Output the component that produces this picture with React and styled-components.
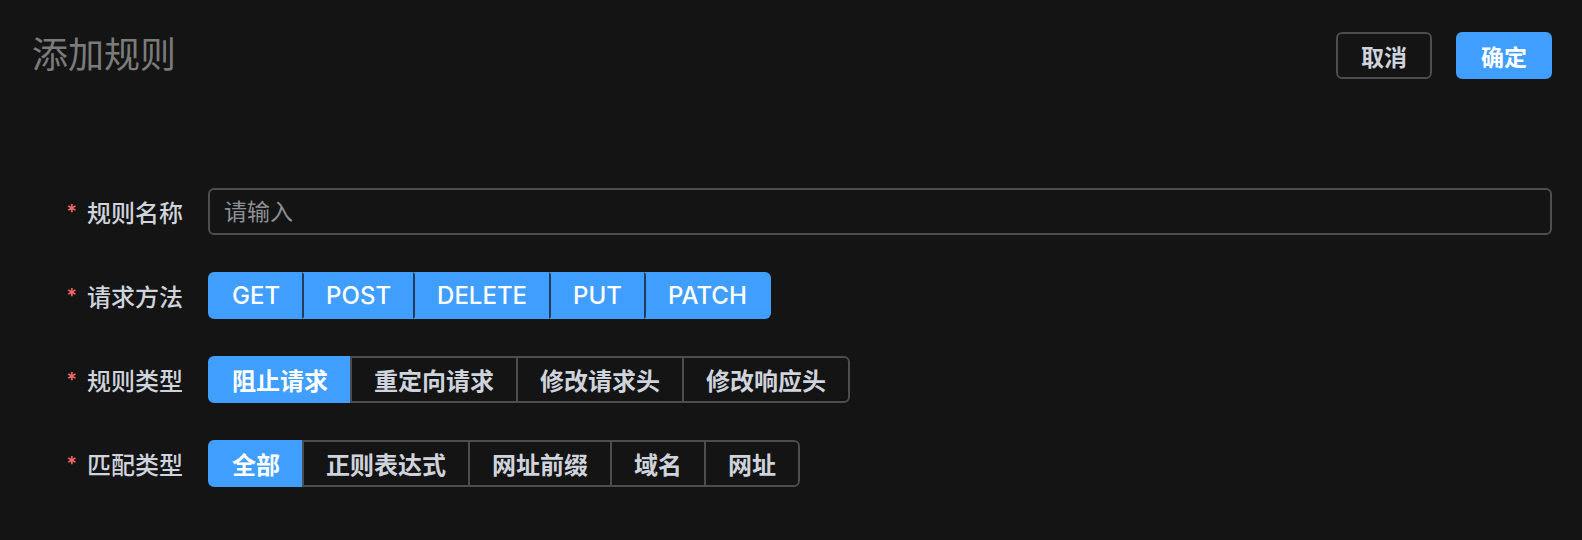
import React, { useState } from "react";
import styled, { createGlobalStyle, css } from "styled-components";

const GlobalStyle = createGlobalStyle`
  html, body {
    margin: 0;
    padding: 0;
    background: #141414;
  }
  body {
    font-family: "Inter", "Noto Sans CJK SC", sans-serif;
    color: #cfd3dc;
  }
`;

const methods = ["GET", "POST", "DELETE", "PUT", "PATCH"];
const ruleTypes = ["阻止请求", "重定向请求", "修改请求头", "修改响应头"];
const matchTypes = ["全部", "正则表达式", "网址前缀", "域名", "网址"];

function Segmented({ items, isActive, onPick, weight }) {
  return (
    <SegmentGroup>
      {items.map((item, i) => (
        <SegmentItem
          key={item}
          $weight={weight}
          $active={isActive(item)}
          $prevActive={i > 0 && isActive(items[i - 1])}
          onClick={() => onPick(item)}
        >
          {item}
        </SegmentItem>
      ))}
    </SegmentGroup>
  );
}

function FormRow({ label, children }) {
  return (
    <Row>
      <Label>
        <Star>*</Star>
        {label}
      </Label>
      <Control>{children}</Control>
    </Row>
  );
}

export default function App() {
  const [picked, setPicked] = useState(methods);
  const [ruleType, setRuleType] = useState("阻止请求");
  const [matchType, setMatchType] = useState("全部");

  function toggleMethod(m) {
    setPicked((list) =>
      list.includes(m) ? list.filter((x) => x !== m) : [...list, m]
    );
  }

  return (
    <Page>
      <GlobalStyle />
      <Header>
        <Title>添加规则</Title>
        <Actions>
          <Button>取消</Button>
          <Button $primary>确定</Button>
        </Actions>
      </Header>
      <Form>
        <FormRow label="规则名称">
          <Input placeholder="请输入" />
        </FormRow>
        <FormRow label="请求方法">
          <Segmented
            items={methods}
            weight={500}
            isActive={(m) => picked.includes(m)}
            onPick={toggleMethod}
          />
        </FormRow>
        <FormRow label="规则类型">
          <Segmented
            items={ruleTypes}
            isActive={(t) => t === ruleType}
            onPick={setRuleType}
          />
        </FormRow>
        <FormRow label="匹配类型">
          <Segmented
            items={matchTypes}
            isActive={(t) => t === matchType}
            onPick={setMatchType}
          />
        </FormRow>
      </Form>
    </Page>
  );
}

const Page = styled.div`
  width: 1582px;
  min-height: 540px;
  box-sizing: border-box;
  padding: 32px 30px 0 32px;
`;

const Header = styled.div`
  display: flex;
  align-items: center;
  justify-content: space-between;
  height: 47px;
`;

const Title = styled.h1`
  margin: 0;
  font-size: 36px;
  font-weight: 400;
  color: #7b7b7b;
  line-height: 47px;
`;

const Actions = styled.div`
  display: flex;
  gap: 24px;
`;

const Button = styled.button`
  width: 96px;
  height: 47px;
  border-radius: 6px;
  font-family: inherit;
  font-size: 23px;
  font-weight: 700;
  cursor: pointer;
  border: 2px solid #4c4d4f;
  background: transparent;
  color: #cfd3dc;
  ${(p) =>
    p.$primary &&
    css`
      background: #409eff;
      border-color: #409eff;
      color: #ffffff;
    `}
`;

const Form = styled.div`
  margin-top: 109px;
  display: flex;
  flex-direction: column;
  gap: 37px;
`;

const Row = styled.div`
  display: flex;
  align-items: center;
  height: 47px;
`;

const Label = styled.div`
  width: 176px;
  flex-shrink: 0;
  box-sizing: border-box;
  padding-right: 25px;
  display: flex;
  align-items: center;
  justify-content: flex-end;
  font-size: 24px;
  font-weight: 500;
  color: #cfd3dc;
`;

const Star = styled.span`
  color: #f56c6c;
  font-size: 20px;
  margin-right: 10px;
`;

const Control = styled.div`
  flex: 1;
  display: flex;
`;

const Input = styled.input`
  flex: 1;
  height: 47px;
  box-sizing: border-box;
  border: 2px solid #4c4d4f;
  border-radius: 6px;
  background: transparent;
  padding: 0 14px;
  font-family: inherit;
  font-size: 23px;
  color: #cfd3dc;
  outline: none;
  &::placeholder {
    color: #8d9095;
  }
`;

const SegmentGroup = styled.div`
  display: flex;
`;

const SegmentItem = styled.div`
  height: 47px;
  box-sizing: border-box;
  display: flex;
  align-items: center;
  padding: 0 22px;
  font-size: 24px;
  font-weight: ${(p) => p.$weight || 700};
  cursor: pointer;
  color: #cfd3dc;
  border: 2px solid #4c4d4f;
  margin-left: -2px;
  background: transparent;
  &:first-child {
    margin-left: 0;
    border-radius: 6px 0 0 6px;
  }
  &:last-child {
    border-radius: 0 6px 6px 0;
  }
  ${(p) =>
    p.$active &&
    css`
      background: #409eff;
      border-color: #409eff;
      color: #ffffff;
    `}
  ${(p) =>
    p.$active &&
    p.$prevActive &&
    css`
      border-left-color: #213d5b;
    `}
`;
